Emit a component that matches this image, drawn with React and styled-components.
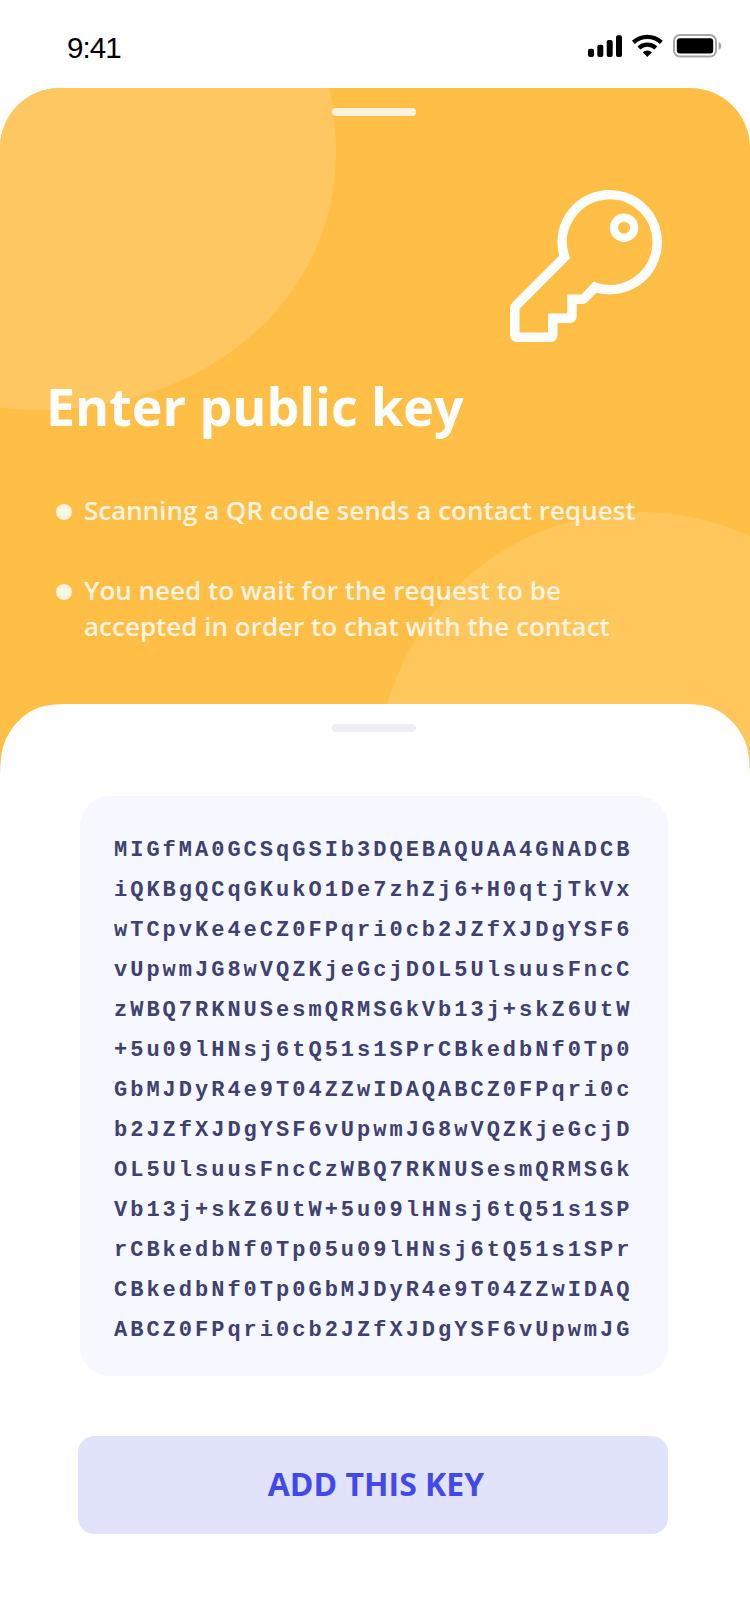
import React from "react";
import styled, { createGlobalStyle } from "styled-components";

const GlobalStyle = createGlobalStyle`
  *, *::before, *::after { box-sizing: border-box; }
  body { margin: 0; background: #fff; font-family: "Open Sans", "Noto Sans", sans-serif; }
`;

const Screen = styled.div`
  width: 750px;
  height: 1624px;
  display: flex;
  flex-direction: column;
  overflow: hidden;
  background: #fff;
`;

const StatusBar = styled.header`
  height: 88px;
  flex: none;
  display: flex;
  justify-content: space-between;
  padding: 30px 28px 0 67px;
`;

const Clock = styled.time`
  font: 400 29.5px/36px "Liberation Sans", sans-serif;
  letter-spacing: -0.9px;
  color: #000;
`;

const StatusIcons = styled.svg`
  display: block;
  width: 134px;
  height: 28px;
`;

const Hero = styled.section`
  position: relative;
  height: 700px;
  flex: none;
  display: flex;
  flex-direction: column;
  border-radius: 60px 60px 0 0;
  overflow: hidden;
  background: #ffbe46;
`;

const HeroShapes = styled.svg`
  position: absolute;
  inset: 0;
  width: 750px;
  height: 700px;
`;

const HeroContent = styled.div`
  position: relative;
  display: flex;
  flex-direction: column;
  padding-top: 20px;
`;

const Grabber = styled.div`
  width: 84px;
  height: 8px;
  margin-left: 332px;
  flex: none;
  border-radius: 4px;
  background: ${(p) => p.$color};
`;

const KeyIcon = styled.svg`
  display: block;
  width: 152px;
  height: 152px;
  margin: 74px 0 0 510px;
  overflow: visible;
`;

const Title = styled.h1`
  margin: 28px 0 0 46px;
  font-size: 52px;
  line-height: 72px;
  font-weight: 700;
  letter-spacing: -0.05px;
  color: #fff;
  white-space: nowrap;
`;

const Notes = styled.ul`
  margin: 50px 0 0;
  padding: 0 0 0 56px;
  list-style: none;
  display: flex;
  flex-direction: column;
  gap: 44px;
`;

const Note = styled.li`
  display: flex;
  gap: 12px;
  color: #fff4e0;
  font-size: 26px;
  line-height: 36px;
  font-weight: 600;
  white-space: pre-line;

  &::before {
    content: "";
    width: 16px;
    height: 16px;
    margin-top: 12px;
    border-radius: 50%;
    background: #fff4e0;
  }
`;

const Sheet = styled.main`
  position: relative;
  flex: 1;
  margin-top: -84px;
  padding-top: 20px;
  display: flex;
  flex-direction: column;
  background: #fff;
  clip-path: path("M0 76 C0 54 2 42 7 33 C14 19 26 8 40 3 C49 0.5 59 0 74 0 H676 C691 0 701 0.5 710 3 C724 8 736 19 743 33 C748 42 750 54 750 76 V920 H0 Z");
`;

const KeyCard = styled.div`
  width: 588px;
  height: 580px;
  margin: 64px 0 0 80px;
  padding: 35px 0 0 34px;
  border-radius: 30px;
  background: #f7f7ff;
`;

const KeyLine = styled.div`
  font: 700 22px/40px "Liberation Mono", monospace;
  letter-spacing: 3px;
  color: #3f4170;
  white-space: nowrap;
`;

const AddButton = styled.button`
  width: 590px;
  height: 98px;
  margin: 60px 0 0 78px;
  padding: 0 0 2px 6px;
  border: 0;
  border-radius: 16px;
  background: #e1e3fb;
  color: #4149ee;
  font: 700 32px/44px "Open Sans", sans-serif;
`;

const lines = [
  "MIGfMA0GCSqGSIb3DQEBAQUAA4GNADCB",
  "iQKBgQCqGKukO1De7zhZj6+H0qtjTkVx",
  "wTCpvKe4eCZ0FPqri0cb2JZfXJDgYSF6",
  "vUpwmJG8wVQZKjeGcjDOL5UlsuusFncC",
  "zWBQ7RKNUSesmQRMSGkVb13j+skZ6UtW",
  "+5u09lHNsj6tQ51s1SPrCBkedbNf0Tp0",
  "GbMJDyR4e9T04ZZwIDAQABCZ0FPqri0c",
  "b2JZfXJDgYSF6vUpwmJG8wVQZKjeGcjD",
  "OL5UlsuusFncCzWBQ7RKNUSesmQRMSGk",
  "Vb13j+skZ6UtW+5u09lHNsj6tQ51s1SP",
  "rCBkedbNf0Tp05u09lHNsj6tQ51s1SPr",
  "CBkedbNf0Tp0GbMJDyR4e9T04ZZwIDAQ",
  "ABCZ0FPqri0cb2JZfXJDgYSF6vUpwmJG",
];

export default function App() {
  return (
    <Screen>
      <GlobalStyle />
      <StatusBar>
        <Clock>9:41</Clock>
        <StatusIcons viewBox="0 0 134 28">
          <rect x="0" y="18.7" width="6" height="8.3" rx="2" />
          <rect x="9.3" y="14.7" width="6" height="12.3" rx="2" />
          <rect x="18.7" y="10" width="6" height="17" rx="2" />
          <rect x="28" y="5.3" width="6" height="21.7" rx="2" />
          <g fill="none" stroke="#000" strokeWidth="4.3">
            <path d="M45.4 12.4a20.2 20.2 0 0 1 27.9 0" />
            <path d="M50.9 18a12.2 12.2 0 0 1 16.9 0" />
          </g>
          <path d="M54.8 22.3a6.6 6.6 0 0 1 9.1 0L59.3 27z" />
          <rect x="86" y="5" width="42" height="21.6" rx="6" fill="none" stroke="#a6a6a6" strokeWidth="2" />
          <rect x="88.8" y="8.2" width="36.4" height="15.2" rx="3" />
          <path d="M130.7 12v8c1.6-.7 2.6-2.3 2.6-4s-1-3.3-2.6-4z" fill="#a6a6a6" />
        </StatusIcons>
      </StatusBar>
      <Hero>
        <HeroShapes viewBox="0 0 750 700">
          <path d="M0 0H329C333.500 20 336 42 336 64C336 210 208 322 40 322Q20 322 0 319.700Z" fill="#ffc761" />
          <circle cx="640" cy="686" r="262" fill="#ffc65c" />
        </HeroShapes>
        <HeroContent>
          <Grabber $color="#fff2dc" />
          <KeyIcon viewBox="510 190 152 152" fill="none" stroke="#fff" strokeWidth="9.5">
            <path d="M564.6 257A47.5 47.5 0 1 1 595 287.3L584.5 298.3Q583.5 299.3 582 299.3H572V316Q572 318.2 569.8 318.2H552.8V335Q552.8 337.2 550.6 337.2H517Q514.8 337.2 514.8 335V308.500Q514.800 306.800 516 305.600Z" />
            <circle cx="624.1" cy="227.8" r="10.1" strokeWidth="8.2" />
          </KeyIcon>
          <Title>Enter public key</Title>
          <Notes>
            <Note>Scanning a QR code sends a contact request</Note>
            <Note>{"You need to wait for the request to be\naccepted in order to chat with the contact"}</Note>
          </Notes>
        </HeroContent>
      </Hero>
      <Sheet>
        <Grabber $color="#eeeef3" />
        <KeyCard>
          {lines.map((line) => (
            <KeyLine key={line}>{line}</KeyLine>
          ))}
        </KeyCard>
        <AddButton>ADD THIS KEY</AddButton>
      </Sheet>
    </Screen>
  );
}
